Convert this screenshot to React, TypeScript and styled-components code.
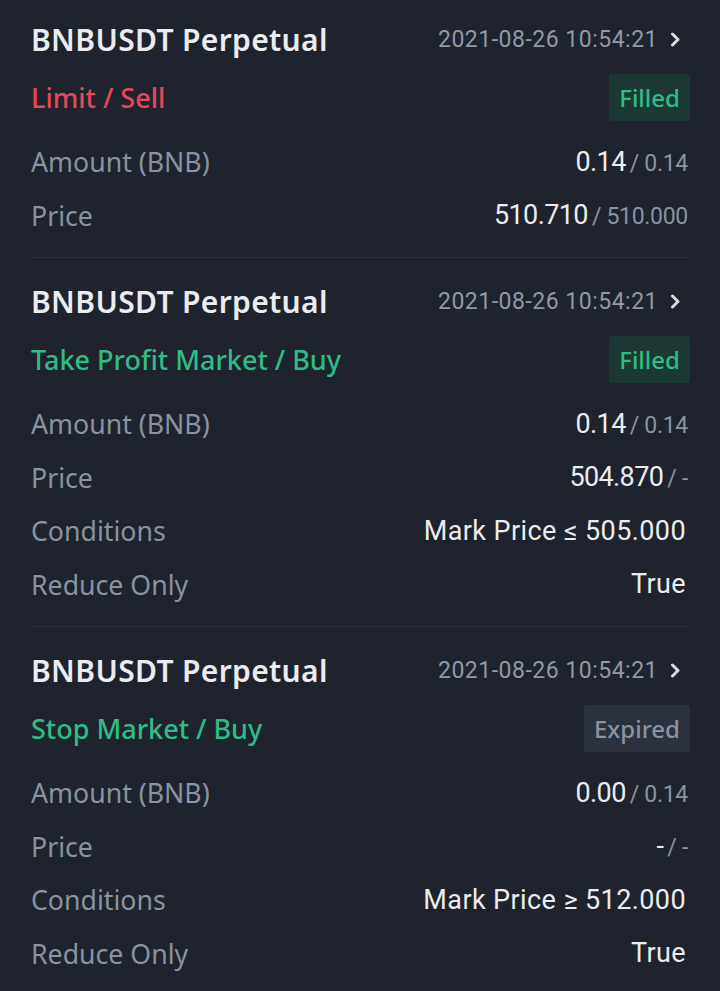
import styled, { createGlobalStyle } from "styled-components";

const GlobalStyle = createGlobalStyle`
  html, body {
    margin: 0;
    padding: 0;
    background: #1e232d;
  }
  body {
    font-family: "Noto Sans", "Open Sans", Roboto, sans-serif;
    -webkit-font-smoothing: antialiased;
  }
`;

const Page = styled.div`
  width: 720px;
  min-height: 991px;
  background: #1e232d;
  padding: 15px 30px 0 31px;
  box-sizing: border-box;
`;

const Card = styled.section`
  padding-bottom: 15px;
  & + & {
    border-top: 1px solid #2c323d;
    padding-top: 19px;
  }
`;

const Header = styled.div`
  display: flex;
  align-items: center;
  justify-content: space-between;
  height: 48px;
`;

const Title = styled.h2`
  margin: 0;
  font-size: 30px;
  font-weight: 600;
  color: #eaecef;
  letter-spacing: 0.35px;
`;

const DateLink = styled.div`
  display: flex;
  align-items: center;
  gap: 12px;
  font-family: Roboto, "Noto Sans", sans-serif;
  font-size: 23px;
  color: #9199a6;
  letter-spacing: 0.5px;
  padding-right: 9px;
`;

const TypeRow = styled.div`
  display: flex;
  align-items: center;
  justify-content: space-between;
  height: 48px;
  margin-top: 10px;
`;

const OrderType = styled.span<{ $side: "buy" | "sell" }>`
  font-size: 27px;
  font-weight: 500;
  color: ${({ $side }) => ($side === "sell" ? "#e5475b" : "#2ebd85")};
`;

const Badge = styled.span<{ $status: "filled" | "expired" }>`
  display: flex;
  align-items: center;
  justify-content: center;
  height: 47px;
  padding: 0 10px;
  box-sizing: border-box;
  font-size: 24px;
  font-weight: 500;
  border-radius: 2px;
  color: ${({ $status }) => ($status === "filled" ? "#2ebd85" : "#8b93a1")};
  background: ${({ $status }) =>
    $status === "filled" ? "#1b3834" : "#2b313d"};
`;

const Rows = styled.div`
  margin-top: 14px;
  display: flex;
  flex-direction: column;
`;

const Row = styled.div`
  display: flex;
  align-items: center;
  justify-content: space-between;
  height: 53.5px;
`;

const Label = styled.span`
  font-size: 26.7px;
  color: #8a93a1;
`;

const Value = styled.span<{ $text?: boolean }>`
  display: flex;
  align-items: baseline;
  gap: 4px;
  font-family: Roboto, "Noto Sans", sans-serif;
  font-size: 27px;
  color: #eaecef;
  letter-spacing: ${({ $text }) => ($text ? "0.4px" : "-0.6px")};
  padding-right: ${({ $text }) => ($text ? "4px" : "2px")};
`;

const Sub = styled.span`
  font-size: 23px;
  color: #8a93a1;
  letter-spacing: -0.3px;
`;

const Chevron = () => (
  <svg width="11" height="15" viewBox="0 0 11 15">
    <path
      d="M2.5 2 L8 7.5 L2.5 13"
      fill="none"
      stroke="#d7dbe0"
      strokeWidth="3"
      strokeLinecap="round"
      strokeLinejoin="round"
    />
  </svg>
);

type Field = { label: string; main: string; sub?: string; text?: boolean };

type Order = {
  type: string;
  side: "buy" | "sell";
  status: "filled" | "expired";
  fields: Field[];
};

const orders: Order[] = [
  {
    type: "Limit / Sell",
    side: "sell",
    status: "filled",
    fields: [
      { label: "Amount (BNB)", main: "0.14", sub: "/ 0.14" },
      { label: "Price", main: "510.710", sub: "/ 510.000" },
    ],
  },
  {
    type: "Take Profit Market / Buy",
    side: "buy",
    status: "filled",
    fields: [
      { label: "Amount (BNB)", main: "0.14", sub: "/ 0.14" },
      { label: "Price", main: "504.870", sub: "/ -" },
      { label: "Conditions", main: "Mark Price ≤ 505.000", text: true },
      { label: "Reduce Only", main: "True", text: true },
    ],
  },
  {
    type: "Stop Market / Buy",
    side: "buy",
    status: "expired",
    fields: [
      { label: "Amount (BNB)", main: "0.00", sub: "/ 0.14" },
      { label: "Price", main: "-", sub: "/ -" },
      { label: "Conditions", main: "Mark Price ≥ 512.000", text: true },
      { label: "Reduce Only", main: "True", text: true },
    ],
  },
];

const App = () => {
  return (
    <>
      <GlobalStyle />
      <Page>
        {orders.map((o, i) => (
          <Card key={i}>
            <Header>
              <Title>BNBUSDT Perpetual</Title>
              <DateLink>
                2021-08-26 10:54:21
                <Chevron />
              </DateLink>
            </Header>
            <TypeRow>
              <OrderType $side={o.side}>{o.type}</OrderType>
              <Badge $status={o.status}>
                {o.status === "filled" ? "Filled" : "Expired"}
              </Badge>
            </TypeRow>
            <Rows>
              {o.fields.map((f) => (
                <Row key={f.label}>
                  <Label>{f.label}</Label>
                  <Value $text={f.text}>
                    {f.main}
                    {f.sub && <Sub>{f.sub}</Sub>}
                  </Value>
                </Row>
              ))}
            </Rows>
          </Card>
        ))}
      </Page>
    </>
  );
};

export default App;
